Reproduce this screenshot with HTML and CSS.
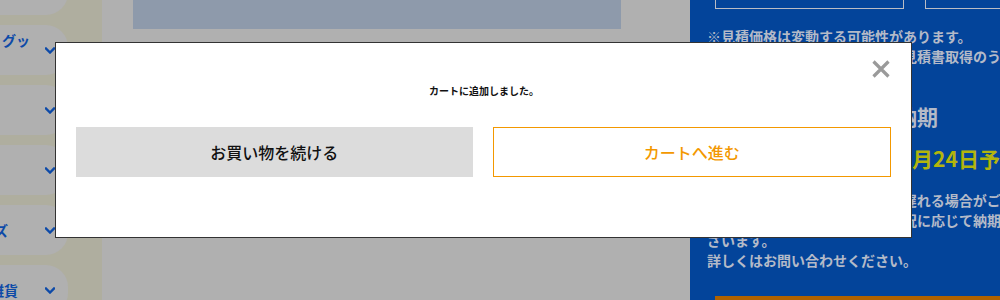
FILE: index.html
```html
<!DOCTYPE html>
<html lang="ja">
<head>
<meta charset="utf-8">
<title>カートに追加しました</title>
<link rel="stylesheet" href="styles.css">
</head>
<body>
<div class="page">
  <aside class="sidebar">
    <ul class="menu">
      <li class="menu-item"><span class="label">カテゴリ</span></li>
      <li class="menu-item"><span class="label label-up">バッグ・グッ</span><svg class="chev" viewBox="0 0 10 7"><polyline points="1,1.5 5,5.5 9,1.5"/></svg></li>
      <li class="menu-item"><span class="label"></span><svg class="chev" viewBox="0 0 10 7"><polyline points="1,1.5 5,5.5 9,1.5"/></svg></li>
      <li class="menu-item"><span class="label"></span><svg class="chev" viewBox="0 0 10 7"><polyline points="1,1.5 5,5.5 9,1.5"/></svg></li>
      <li class="menu-item"><span class="label label-short">ノベルティグッズ</span><svg class="chev" viewBox="0 0 10 7"><polyline points="1,1.5 5,5.5 9,1.5"/></svg></li>
      <li class="menu-item"><span class="label label-mid">生活雑貨</span><svg class="chev" viewBox="0 0 10 7"><polyline points="1,1.5 5,5.5 9,1.5"/></svg></li>
    </ul>
  </aside>

  <main class="main">
    <div class="banner"></div>
  </main>

  <section class="panel">
    <div class="panel-boxes">
      <div class="panel-box"></div>
      <div class="panel-box panel-box-wide"></div>
    </div>
    <p class="note">※見積価格は変動する可能性があります。<br>※ご注文の際は、必ず最新版の見積書取得のうえ、お申し込みください。</p>
    <h2 class="delivery-title">ご注文商品のお届け納期</h2>
    <p class="delivery-date">最短お届け 2024年10月24日予定</p>
    <p class="note note-body">※天候や交通事情により納期が遅れる場合がございます。<br>※ご注文の数量や工場の稼働状況に応じて納期が変更になる場合がご<br>ざいます。<br>詳しくはお問い合わせください。</p>
    <div class="panel-bar"></div>
  </section>
</div>

<div class="modal" role="dialog">
  <button class="modal-close" type="button" aria-label="閉じる">
    <svg viewBox="0 0 18 18"><path d="M1.5 1.5 L16.5 16.5 M16.5 1.5 L1.5 16.5"/></svg>
  </button>
  <p class="modal-message">カートに追加しました。</p>
  <div class="modal-actions">
    <button class="btn btn-continue" type="button">お買い物を続ける</button>
    <button class="btn btn-cart" type="button">カートへ進む</button>
  </div>
</div>
</body>
</html>
```

FILE: styles.css
```css
* { box-sizing: border-box; }

html, body {
  margin: 0;
  padding: 0;
}

body {
  width: 1000px;
  height: 300px;
  overflow: hidden;
  background: #b0b0b0;
  font-family: "Noto Sans CJK JP", "Noto Sans", sans-serif;
  position: relative;
}

.page {
  display: grid;
  grid-template-columns: 102px 588px 310px;
  height: 300px;
}

/* Sidebar */
.sidebar {
  background: #afae9f;
  overflow: visible;
}

.menu {
  list-style: none;
  margin: -35px 0 0;
  padding: 0;
  display: flex;
  flex-direction: column;
  gap: 10px;
}

.menu-item {
  height: 50px;
  width: 68px;
  background: #b0b0b0;
  border-radius: 0 22px 22px 0;
  display: flex;
  align-items: center;
}

.label {
  width: 30px;
  flex: 0 0 30px;
  display: flex;
  justify-content: flex-end;
  white-space: nowrap;
  font-size: 14px;
  font-weight: 700;
  color: #0d4aa8;
  line-height: 20px;
}

.label-up { margin-bottom: 20px; }
.label-short { width: 8px; flex-basis: 8px; }
.label-mid { width: 18px; flex-basis: 18px; }

.chev {
  width: 10px;
  height: 7px;
  margin-left: 15px;
  fill: none;
  stroke: #0d4aa8;
  stroke-width: 2.4;
  stroke-linecap: square;
}

.label-short + .chev { margin-left: 37px; }
.label-mid + .chev { margin-left: 27px; }

/* Main */
.main {
  padding-left: 31px;
}

.banner {
  width: 488px;
  height: 29px;
  background: #8e9aab;
}

/* Right panel */
.panel {
  background: #03449a;
  padding-left: 17px;
  overflow: hidden;
  white-space: nowrap;
}

.panel-boxes {
  display: flex;
  gap: 21px;
  margin: -32px 0 0 8px;
}

.panel-box {
  flex: 0 0 189px;
  height: 41px;
  border: 1px solid #b9bcc4;
}

.note {
  margin: 17px 0 0;
  font-size: 14px;
  line-height: 20px;
  font-weight: 700;
  color: #b4bac8;
}

.delivery-title {
  margin: 35px 0 0;
  font-size: 21px;
  line-height: 30px;
  font-weight: 700;
  color: #b4bac8;
}

.delivery-date {
  margin: 12px 0 0;
  font-size: 21px;
  line-height: 30px;
  font-weight: 700;
  color: #b3b50c;
}

.note-body {
  margin-top: 17px;
}

.panel-bar {
  margin: 26px 0 0 8px;
  height: 10px;
  background: #b06200;
}

/* Modal */
.modal {
  position: absolute;
  left: 55px;
  top: 42px;
  width: 857px;
  height: 196px;
  background: #fff;
  border: 1px solid #333;
  padding: 40px 20px 0;
}

.modal-close {
  position: absolute;
  top: 17px;
  right: 21px;
  width: 18px;
  height: 18px;
  padding: 0;
  border: 0;
  background: none;
  cursor: pointer;
}

.modal-close svg {
  display: block;
  width: 18px;
  height: 18px;
  stroke: #9a9a9a;
  stroke-width: 3.2;
  fill: none;
}

.modal-message {
  margin: 0;
  text-align: center;
  font-size: 10px;
  line-height: 15px;
  font-weight: 700;
  color: #111;
  padding-left: 1px;
}

.modal-actions {
  display: flex;
  gap: 20px;
  margin-top: 29px;
}

.btn {
  flex: 1 1 0;
  height: 50px;
  font-family: inherit;
  font-size: 16px;
  line-height: 1;
  font-weight: 500;
  border: 0;
  padding: 0;
  cursor: pointer;
}

.btn-continue {
  background: #dcdcdc;
  color: #111;
}

.btn-cart {
  background: #fff;
  border: 1px solid #f39800;
  color: #f39800;
}
```
